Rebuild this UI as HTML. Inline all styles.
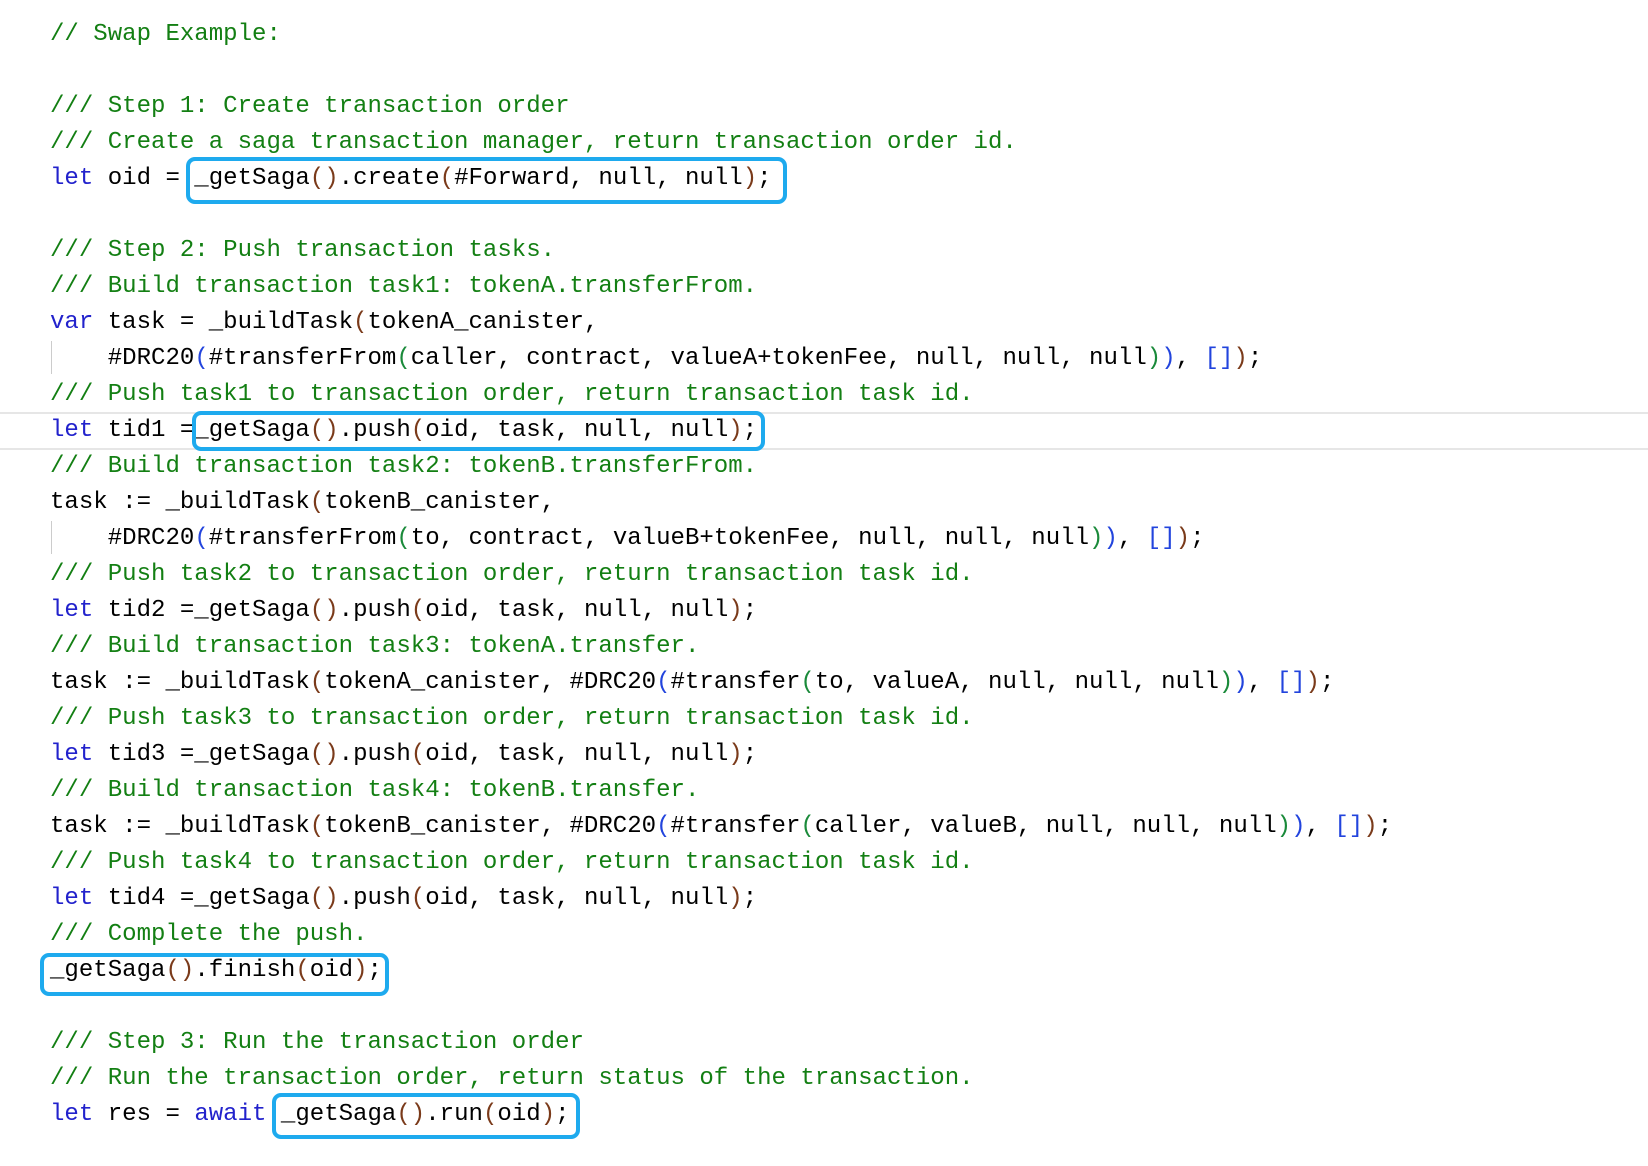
<!DOCTYPE html>
<html><head><meta charset="utf-8"><style>
html,body{margin:0;padding:0;background:#fff;width:1648px;height:1166px;overflow:hidden;position:relative}
pre{position:absolute;left:50px;top:17px;margin:0;font-family:"Liberation Mono",monospace;font-size:24.05px;line-height:36px;color:#000}
.c{color:#137f13}.k{color:#2222cc}.p{color:#7a3a1a}.b{color:#2244dd}.g{color:#1a8a3a}
.box{position:absolute;border:4px solid #1eaaee;border-radius:9px;box-sizing:border-box}
.hl{position:absolute;left:0;width:1648px;top:412px;height:38px;border-top:2px solid #e6e6e6;border-bottom:2px solid #e6e6e6;box-sizing:border-box}
.guide{position:absolute;left:51px;width:1px;background:#ccc}
</style></head><body>
<div class="hl"></div>
<div class="guide" style="top:341px;height:33px"></div>
<div class="guide" style="top:521px;height:33px"></div>
<pre><span class="c">// Swap Example:</span>

<span class="c">/// Step 1: Create transaction order</span>
<span class="c">/// Create a saga transaction manager, return transaction order id.</span>
<span class="k">let</span> oid = _getSaga<span class="p">()</span>.create<span class="p">(</span>#Forward, null, null<span class="p">)</span>;

<span class="c">/// Step 2: Push transaction tasks.</span>
<span class="c">/// Build transaction task1: tokenA.transferFrom.</span>
<span class="k">var</span> task = _buildTask<span class="p">(</span>tokenA_canister,
    #DRC20<span class="b">(</span>#transferFrom<span class="g">(</span>caller, contract, valueA+tokenFee, null, null, null<span class="g">)</span><span class="b">)</span>, <span class="b">[]</span><span class="p">)</span>;
<span class="c">/// Push task1 to transaction order, return transaction task id.</span>
<span class="k">let</span> tid1 =_getSaga<span class="p">()</span>.push<span class="p">(</span>oid, task, null, null<span class="p">)</span>;
<span class="c">/// Build transaction task2: tokenB.transferFrom.</span>
task := _buildTask<span class="p">(</span>tokenB_canister,
    #DRC20<span class="b">(</span>#transferFrom<span class="g">(</span>to, contract, valueB+tokenFee, null, null, null<span class="g">)</span><span class="b">)</span>, <span class="b">[]</span><span class="p">)</span>;
<span class="c">/// Push task2 to transaction order, return transaction task id.</span>
<span class="k">let</span> tid2 =_getSaga<span class="p">()</span>.push<span class="p">(</span>oid, task, null, null<span class="p">)</span>;
<span class="c">/// Build transaction task3: tokenA.transfer.</span>
task := _buildTask<span class="p">(</span>tokenA_canister, #DRC20<span class="b">(</span>#transfer<span class="g">(</span>to, valueA, null, null, null<span class="g">)</span><span class="b">)</span>, <span class="b">[]</span><span class="p">)</span>;
<span class="c">/// Push task3 to transaction order, return transaction task id.</span>
<span class="k">let</span> tid3 =_getSaga<span class="p">()</span>.push<span class="p">(</span>oid, task, null, null<span class="p">)</span>;
<span class="c">/// Build transaction task4: tokenB.transfer.</span>
task := _buildTask<span class="p">(</span>tokenB_canister, #DRC20<span class="b">(</span>#transfer<span class="g">(</span>caller, valueB, null, null, null<span class="g">)</span><span class="b">)</span>, <span class="b">[]</span><span class="p">)</span>;
<span class="c">/// Push task4 to transaction order, return transaction task id.</span>
<span class="k">let</span> tid4 =_getSaga<span class="p">()</span>.push<span class="p">(</span>oid, task, null, null<span class="p">)</span>;
<span class="c">/// Complete the push.</span>
_getSaga<span class="p">()</span>.finish<span class="p">(</span>oid<span class="p">)</span>;

<span class="c">/// Step 3: Run the transaction order</span>
<span class="c">/// Run the transaction order, return status of the transaction.</span>
<span class="k">let</span> res = <span class="k">await</span> _getSaga<span class="p">()</span>.run<span class="p">(</span>oid<span class="p">)</span>;
</pre>
<div class="box" style="left:186px;top:157px;width:601px;height:47px"></div>
<div class="box" style="left:192px;top:411px;width:573px;height:40px"></div>
<div class="box" style="left:40px;top:953px;width:349px;height:43px"></div>
<div class="box" style="left:272px;top:1093px;width:308px;height:46px"></div>
</body></html>
